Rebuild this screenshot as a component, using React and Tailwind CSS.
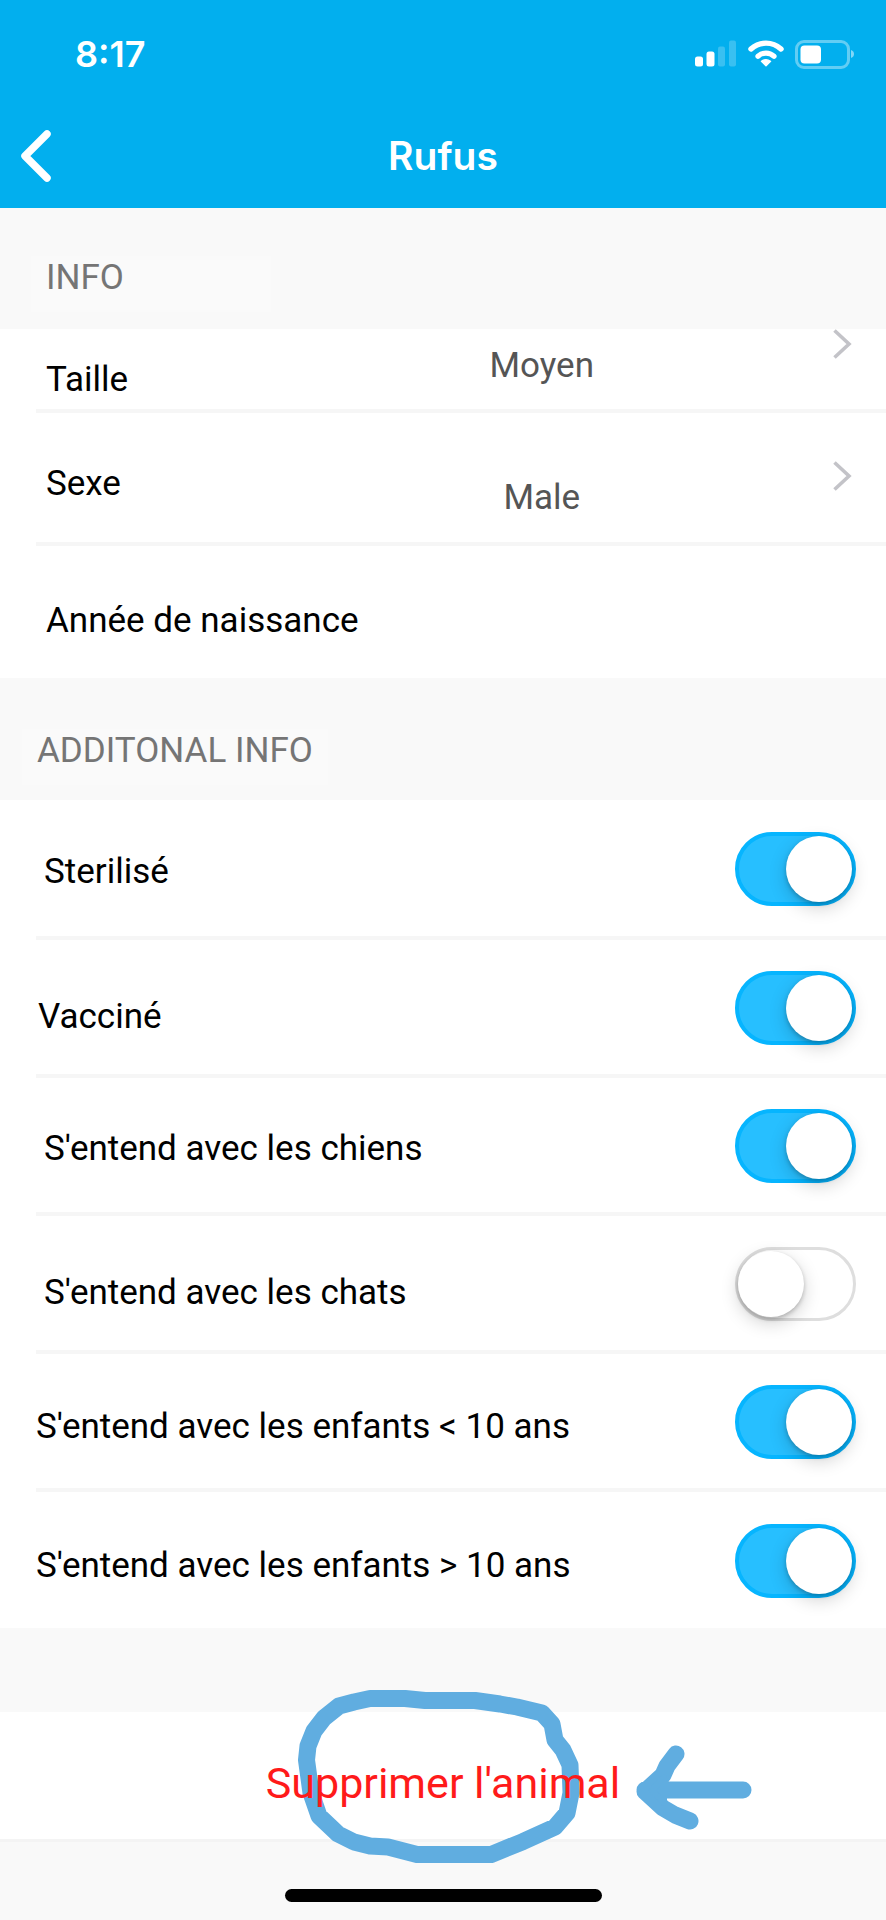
import { useState } from "react";

const profile = [
  { label: "Taille", value: "Moyen", row: "min-h-20", labelPad: "pt-[30px]", valuePad: "pt-4", chevronPad: "pt-0" },
  { label: "Sexe", value: "Male", row: "min-h-[133px] border-t-4", labelPad: "pt-[50px]", valuePad: "pt-16", chevronPad: "pt-12" },
  { label: "Année de naissance", row: "min-h-[136px] border-t-4", labelPad: "pt-[54px]" },
];

const options = [
  { id: "sterilise", label: "Sterilisé", on: true, pad: "pl-2 pt-1.5" },
  { id: "vaccine", label: "Vacciné", on: true, pad: "pl-0.5 pt-[18px]" },
  { id: "chiens", label: "S'entend avec les chiens", on: true, pad: "pl-2 pt-1.5" },
  { id: "chats", label: "S'entend avec les chats", on: false, pad: "pl-2 pt-[18px]" },
  { id: "enfants-moins", label: "S'entend avec les enfants < 10 ans", on: true, pad: "pl-0 pt-2.5" },
  { id: "enfants-plus", label: "S'entend avec les enfants > 10 ans", on: true, pad: "pl-0 pt-2.5" },
];

function StatusBar() {
  return (
    <div className="flex items-center justify-between pl-[75px] pr-8 pt-[34px]">
      <span className="font-['Inter',sans-serif] text-[36px] font-semibold leading-10">8:17</span>
      <div className="flex items-center gap-[11px]">
        <svg width="42" height="30" viewBox="0 0 42 30" fill="#fff" aria-hidden="true">
          <rect x="0" y="17.5" width="8" height="10" rx="2.5" />
          <rect x="11.5" y="12.5" width="8" height="15" rx="2.5" />
          <rect x="23" y="7.5" width="7" height="20" rx="2" opacity="0.22" />
          <rect x="34" y="1.5" width="7" height="26" rx="2" opacity="0.22" />
        </svg>
        <svg width="36" height="30" viewBox="0 0 36 30" fill="none" stroke="#fff" strokeLinecap="round" aria-hidden="true">
          <path d="M3 10C11.5 2.2 24.5 2.2 33 10" strokeWidth="5.4" />
          <path d="M10 17.200C14.7 13 21.3 13 26 17.200" strokeWidth="5.2" />
          <path d="M13.5 22.300Q18 19.2 22.5 22.300L18 26.800Z" fill="#fff" strokeWidth="1.5" strokeLinejoin="round" />
        </svg>
        <svg width="59" height="30" viewBox="0 0 59 30" aria-hidden="true">
          <rect x="1.5" y="2.5" width="52" height="26" rx="7.5" fill="none" stroke="#fff" strokeOpacity="0.38" strokeWidth="3" />
          <rect x="5.5" y="6.5" width="20.5" height="18" rx="4" fill="#fff" />
          <path d="M56 11c2 .6 3 2.300 3 4s-1 3.400-3 4z" fill="#fff" fillOpacity="0.5" />
        </svg>
      </div>
    </div>
  );
}

function SectionTitle({ children, className }) {
  return (
    <div className={`flex bg-[#f9f9f9] ${className}`}>
      <h2 className="min-h-14 min-w-60 bg-[#fafafa] px-[15px] leading-11 text-[#757575]">{children}</h2>
    </div>
  );
}

function Chevron() {
  return (
    <svg width="20" height="30" viewBox="0 0 20 30" fill="none" stroke="#c3c3c8" strokeWidth="3.6" aria-hidden="true">
      <path d="M1.500 1.500L16 15L1.500 28.500" />
    </svg>
  );
}

function Toggle({ id, defaultOn }) {
  const [on, setOn] = useState(defaultOn);
  return (
    <input
      id={id}
      type="checkbox"
      role="switch"
      checked={on}
      onChange={() => setOn(!on)}
      className="flex h-[74px] w-[121px] shrink-0 cursor-pointer appearance-none items-center rounded-full border-[3px] border-[#dedede] bg-white before:size-[66px] before:rounded-full before:bg-white before:shadow-[0_6px_18px_rgba(0,0,0,0.18),0_2px_4px_rgba(0,0,0,0.22)] before:content-[''] checked:justify-end checked:border-[4px] checked:border-[#06b5ff] checked:bg-[#27bfff]"
    />
  );
}

function Annotation() {
  return (
    <svg
      className="pointer-events-none absolute -top-8 left-1/2 -translate-x-1/2"
      width="634"
      height="190"
      viewBox="126 1680 634 190"
      fill="none"
      stroke="#60ade0"
      strokeWidth="17"
      strokeLinecap="round"
      strokeLinejoin="round"
      aria-hidden="true"
    >
      <path d="M306.500 1760L308 1746L314 1731L324 1718L339 1706L354 1702L370 1698.500H405L425 1700.500H475L500 1704L517 1707L542 1713L552 1724L555 1740L563 1750L570 1765L571 1793L567 1813L555 1827L523 1841.500L491 1854.500H417L388 1847L370 1846L354 1842L338 1834L319 1816L311 1793Z" />
      <path d="M645 1790H743M676 1754L667 1766L663 1775L645 1791.500L663 1808L675 1815L690 1821" />
      <path d="M652 1790L664 1778V1803Z" fill="#60ade0" strokeWidth="6" />
    </svg>
  );
}

export default function App() {
  return (
    <div className="flex min-h-screen flex-col bg-[#f9f9f9] font-['Roboto',sans-serif] text-[35px] leading-[42px] text-black">
      <header className="min-h-52 bg-[#02afee] text-white">
        <StatusBar />
        <div className="grid grid-cols-[80px_1fr_80px] items-center pt-[54px]">
          <button type="button" aria-label="Retour" className="pl-[18px]">
            <svg width="36" height="56" viewBox="0 0 36 56" fill="none" stroke="#fff" strokeWidth="7.500" strokeLinecap="round" strokeLinejoin="round" aria-hidden="true">
              <path d="M29 6L7 28L29 50" />
            </svg>
          </button>
          <h1 className="text-center font-['Inter',sans-serif] text-[39px] font-semibold leading-[56px]">Rufus</h1>
        </div>
      </header>

      <main>
        <SectionTitle className="pb-[17px] pl-[31px] pt-12">INFO</SectionTitle>
        <ul className="bg-white pl-9">
          {profile.map((item) => (
            <li key={item.label} className={`border-[#f6f6f6] ${item.row}`}>
              {item.value ? (
                <button type="button" className="grid w-full grid-cols-[39%_1fr_20%] items-start text-left">
                  <span className={`pl-[10px] ${item.labelPad}`}>{item.label}</span>
                  <span className={`text-center text-[#555] ${item.valuePad}`}>{item.value}</span>
                  <span className={`flex justify-end pr-[33px] ${item.chevronPad}`}>
                    <Chevron />
                  </span>
                </button>
              ) : (
                <p className={`pl-[10px] ${item.labelPad}`}>{item.label}</p>
              )}
            </li>
          ))}
        </ul>

        <SectionTitle className="pb-[15px] pl-[22px] pt-[51px]">ADDITONAL INFO</SectionTitle>
        <ul className="bg-white pl-9">
          {options.map((item) => (
            <li
              key={item.id}
              className="flex min-h-[138px] items-center justify-between border-t-4 border-[#f6f6f6] pr-[30px] pt-0.5 first:min-h-[136px] first:border-t-0 last:min-h-[140px]"
            >
              <label htmlFor={item.id} className={item.pad}>
                {item.label}
              </label>
              <Toggle id={item.id} defaultOn={item.on} />
            </li>
          ))}
        </ul>

        <section className="relative mt-[84px] flex min-h-[130px] flex-col border-b-[3px] border-[#f4f4f4] bg-white">
          <Annotation />
          <button type="button" className="relative flex-1 pt-3.5 text-center text-[43px] leading-[50px] text-[#ff1a1a]">
            Supprimer l'animal
          </button>
        </section>
      </main>

      <footer className="mt-auto flex justify-center pb-[18px] pt-4">
        <div className="h-[13px] w-[317px] rounded-full bg-black" />
      </footer>
    </div>
  );
}
